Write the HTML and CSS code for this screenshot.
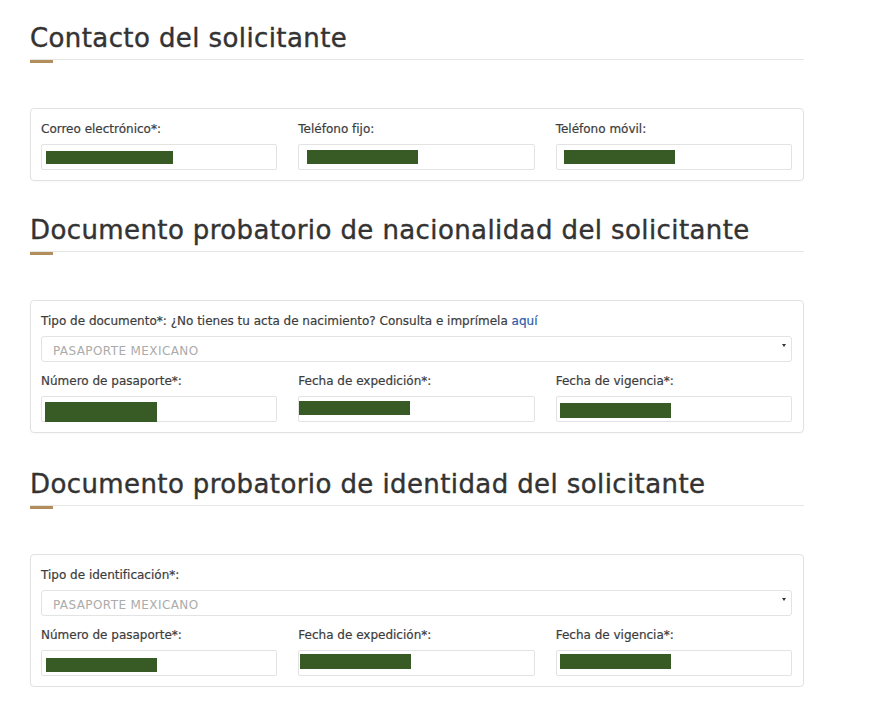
FILE: index.html
```html
<!DOCTYPE html>
<html lang="es">
<head>
<meta charset="utf-8">
<title>Solicitante</title>
<link rel="stylesheet" href="styles.css">
</head>
<body>
<main class="page">
  <section class="section">
    <h2 class="title">Contacto del solicitante</h2>
    <div class="card">
      <div class="row">
        <div class="field">
          <label class="label">Correo electrónico*:</label>
          <div class="input"><span class="bar b1"></span></div>
        </div>
        <div class="field">
          <label class="label">Teléfono fijo:</label>
          <div class="input"><span class="bar b2"></span></div>
        </div>
        <div class="field">
          <label class="label">Teléfono móvil:</label>
          <div class="input"><span class="bar b3"></span></div>
        </div>
      </div>
    </div>
  </section>

  <section class="section">
    <h2 class="title">Documento probatorio de nacionalidad del solicitante</h2>
    <div class="card">
      <label class="label">Tipo de documento*: ¿No tienes tu acta de nacimiento? Consulta e imprímela <a class="link" href="#">aquí</a></label>
      <div class="select"><span class="placeholder">PASAPORTE MEXICANO</span><span class="caret"></span></div>
      <div class="row row-second">
        <div class="field">
          <label class="label">Número de pasaporte*:</label>
          <div class="input"><span class="bar b4"></span></div>
        </div>
        <div class="field">
          <label class="label">Fecha de expedición*:</label>
          <div class="input"><span class="bar b5"></span></div>
        </div>
        <div class="field">
          <label class="label">Fecha de vigencia*:</label>
          <div class="input"><span class="bar b6"></span></div>
        </div>
      </div>
    </div>
  </section>

  <section class="section section-last">
    <h2 class="title">Documento probatorio de identidad del solicitante</h2>
    <div class="card">
      <label class="label">Tipo de identificación*:</label>
      <div class="select"><span class="placeholder">PASAPORTE MEXICANO</span><span class="caret"></span></div>
      <div class="row row-second">
        <div class="field">
          <label class="label">Número de pasaporte*:</label>
          <div class="input"><span class="bar b7"></span></div>
        </div>
        <div class="field">
          <label class="label">Fecha de expedición*:</label>
          <div class="input"><span class="bar b8"></span></div>
        </div>
        <div class="field">
          <label class="label">Fecha de vigencia*:</label>
          <div class="input"><span class="bar b9"></span></div>
        </div>
      </div>
    </div>
  </section>
</main>
</body>
</html>
```

FILE: styles.css
```css
* { box-sizing: border-box; }

html, body {
  margin: 0;
  padding: 0;
  background: #ffffff;
}

body {
  font-family: "DejaVu Sans", "Open Sans", sans-serif;
  color: #3a3a3a;
}

.page {
  width: 804px;
  padding: 23px 0 0 30px;
}

.section + .section {
  margin-top: 34px;
}

.section + .section-last {
  margin-top: 36px;
}

.title {
  position: relative;
  margin: 0;
  font-size: 26px;
  line-height: 31px;
  font-weight: normal;
  color: #333333;
  padding-bottom: 5px;
  border-bottom: 1px solid #e6e6e6;
  letter-spacing: 0.4px;
  -webkit-text-stroke: 0.4px #333333;
}

.title::after {
  content: "";
  position: absolute;
  left: 0;
  bottom: -4px;
  width: 23px;
  height: 3px;
  background: #b38e5d;
}

.card {
  margin-top: 48px;
  border: 1px solid #e1e1e1;
  border-radius: 4px;
  padding: 10px 11px 10px 10px;
  box-shadow: 0 1px 2px rgba(0, 0, 0, 0.03);
}

.row {
  display: grid;
  grid-template-columns: 1fr 1fr 1fr;
  column-gap: 21px;
}

.row-second {
  margin-top: 9px;
}

.field {
  display: flex;
  flex-direction: column;
}

.label {
  display: block;
  font-size: 12px;
  line-height: 20px;
  color: #3c3c3c;
  margin-bottom: 5px;
  -webkit-text-stroke: 0.2px #3c3c3c;
}

.link {
  color: #2f5ba9;
  text-decoration: none;
  -webkit-text-stroke: 0.2px #2f5ba9;
}

.input {
  height: 26px;
  border: 1px solid #e3e3e3;
  border-radius: 2px;
  background: #fff;
}

.select {
  display: flex;
  align-items: center;
  justify-content: space-between;
  height: 26px;
  border: 1px solid #e3e3e3;
  border-radius: 3px;
  padding: 0 5px 0 11px;
  margin-top: 5px;
}

.placeholder {
  font-size: 12px;
  font-weight: normal;
  color: #ababab;
  letter-spacing: 0.4px;
  padding-top: 4px;
}

.caret {
  width: 0;
  height: 0;
  border-left: 2px solid transparent;
  border-right: 2px solid transparent;
  border-top: 3px solid #333;
  margin-top: -8px;
}

.bar {
  display: block;
  background: #385b25;
  height: 14px;
  width: 111px;
}

.b1 { width: 127px; margin: 6px 0 0 4px; height: 13px; }
.b2 { margin: 5px 0 0 8px; }
.b3 { margin: 5px 0 0 7px; }
.b4 { width: 112px; margin: 5px 0 0 3px; height: 20px; }
.b5 { margin: 4px 0 0 0; }
.b6 { margin: 6px 0 0 3px; height: 15px; }
.b7 { margin: 7px 0 0 4px; }
.b8 { margin: 3px 0 0 1px; height: 15px; }
.b9 { margin: 3px 0 0 3px; height: 15px; }
```
